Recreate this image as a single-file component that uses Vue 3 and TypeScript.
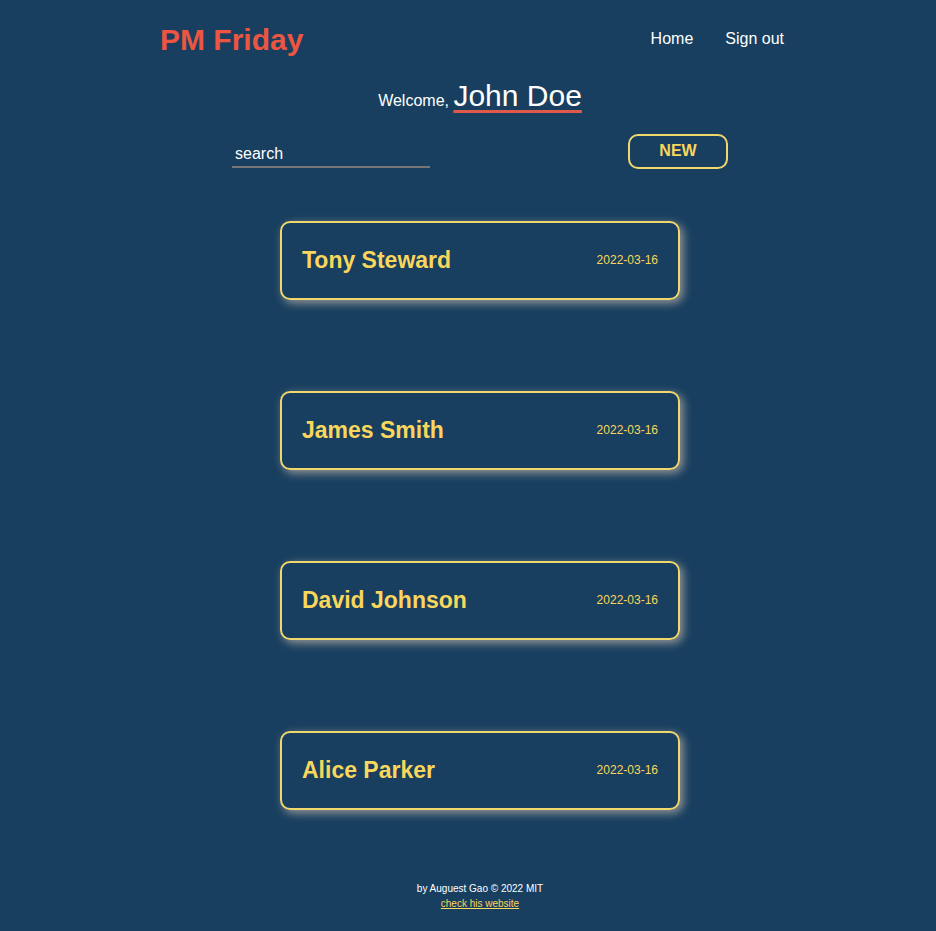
<script setup lang="ts">
import { ref } from 'vue'

interface Project {
  name: string
  date: string
}

const search = ref<string>('')
const projects: Project[] = [
  { name: 'Tony Steward', date: '2022-03-16' },
  { name: 'James Smith', date: '2022-03-16' },
  { name: 'David Johnson', date: '2022-03-16' },
  { name: 'Alice Parker', date: '2022-03-16' },
]
</script>

<template>
  <div class="page">
    <header class="header">
      <h1 class="brand">PM Friday</h1>
      <nav class="nav">
        <a href="#home">Home</a>
        <a href="#signout">Sign out</a>
      </nav>
    </header>
    <main>
      <p class="welcome">Welcome, <span class="user">John Doe</span></p>
      <div class="toolbar">
        <input v-model="search" class="search" type="text" placeholder="search" aria-label="search" />
        <button class="new" type="button">NEW</button>
      </div>
      <ul class="list">
        <li v-for="project in projects" :key="project.name" class="card">
          <h2 class="name">{{ project.name }}</h2>
          <time class="date" :datetime="project.date">{{ project.date }}</time>
        </li>
      </ul>
    </main>
    <footer class="footer">
      <p>by Auguest Gao © 2022 MIT</p>
      <a href="#website">check his website</a>
    </footer>
  </div>
</template>

<style>
body {
  background: #183f5f;
}
</style>

<style scoped>
.page {
  max-width: 640px;
  margin: 0 auto;
  padding: 22px 0 20px 24px;
  color: #fff;
  font: 16px/18px "Liberation Sans", Arial, sans-serif;
}
.header {
  display: flex;
  align-items: flex-end;
  justify-content: space-between;
  padding-right: 16px;
}
.brand {
  margin: 0;
  color: #ec5542;
  font-size: 30px;
  line-height: 36px;
}
.nav {
  display: flex;
  gap: 32px;
  line-height: 20px;
  padding-bottom: 9px;
}
.nav a {
  color: inherit;
  text-decoration: none;
}
.welcome {
  margin: 20px 0 0;
  line-height: 36px;
  text-align: center;
}
.user {
  font-size: 30px;
  text-decoration: underline 3px #e05a49;
  text-underline-offset: 4px;
}
.toolbar {
  display: flex;
  justify-content: space-between;
  gap: 16px;
  margin-top: 15px;
  padding: 0 72px;
}
.search {
  box-sizing: border-box;
  width: 198px;
  height: 34px;
  padding: 8px 3px 0;
  border: 0;
  border-bottom: 2px solid #767676;
  background: transparent;
  color: #fff;
  font: inherit;
  outline: none;
}
.search::placeholder {
  color: #fff;
  opacity: 1;
}
.new {
  box-sizing: border-box;
  width: 100px;
  height: 35px;
  padding: 0 0 2px;
  border: 2px solid #f0d76c;
  border-radius: 10px;
  background: transparent;
  color: #f9d65c;
  font: bold 16px/18px "Liberation Sans", Arial, sans-serif;
}
.list {
  display: grid;
  justify-content: center;
  grid-template-columns: minmax(0, 400px);
  gap: 91px;
  margin: 52px 0 0;
  padding: 0;
  list-style: none;
}
.card {
  display: flex;
  align-items: center;
  justify-content: space-between;
  box-sizing: border-box;
  min-height: 79px;
  padding: 19px 20px 21px;
  border: 2px solid #f0d76c;
  border-radius: 10px;
  box-shadow: 3px 3px 10px #999;
  color: #f9d65c;
}
.name {
  margin: 0;
  font-size: 23px;
  line-height: 26px;
}
.date {
  font-size: 12px;
}
.footer {
  margin-top: 71px;
  text-align: center;
  font-size: 10px;
  line-height: 15px;
}
.footer p {
  margin: 0;
}
.footer a {
  color: #f9d65c;
}
</style>
